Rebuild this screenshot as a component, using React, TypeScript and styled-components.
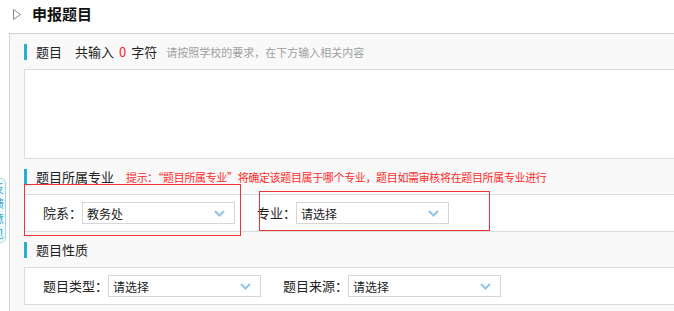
import styled, { createGlobalStyle } from "styled-components"

const Global = createGlobalStyle`
  html, body {
    margin: 0;
    padding: 0;
    background: #fff;
    overflow: hidden;
  }
  body {
    font-family: "Noto Sans CJK SC", "Liberation Sans", sans-serif;
    color: #222;
  }
`

const Page = styled.div`
  position: relative;
  width: 780px;
  height: 311px;
`

const TitleBar = styled.div`
  height: 33px;
  display: flex;
  align-items: center;
  padding-left: 13px;
  padding-bottom: 5px;
  box-sizing: border-box;

  svg{
    margin-right: 11px;
  }

  h1{
    margin: 0;
    font-size: 15px;
    line-height: 18px;
    font-weight: 700;
    color: #111;
  }
`

const Panel = styled.div`
  margin-left: 9px;
  border: 1px solid #d0d0d0;
  background: #f9f9f9;
  padding-left: 14px;
  height: 290px;
  box-sizing: border-box;
`

const SectionHeader = styled.div`
  height: 35px;
  display: flex;
  align-items: center;
  font-size: 13px;
  line-height: 16px;
  color: #222;
  white-space: nowrap;

  &::before{
    content: '';
    width: 3px;
    height: 16px;
    background: #23b1cc;
    margin-right: 9px;
  }

  .count{
    margin-left: 13px;
  }

  .zero{
    color: #ff1a1a;
    margin: 0 5px;
  }

  .gray{
    margin-left: 9px;
    font-size: 11px;
    color: #a0a0a0;
  }

  .red{
    margin-left: 12px;
    font-size: 11px;
    letter-spacing: -0.35px;
    color: #ff2a2a;
  }
`

const TextBox = styled.div`
  height: 90px;
  box-sizing: border-box;
  border: 1px solid #dcdcdc;
  border-right: none;
  background: #fff;
`

const FieldRow = styled.div`
  height: 38px;
  box-sizing: border-box;
  border: 1px solid #dcdcdc;
  border-right: none;
  background: #fff;
  display: flex;
  align-items: center;
  padding-left: 18px;
`

const Field = styled.div<{ $gap?: number }>`
  display: flex;
  align-items: center;
  margin-left: ${p => p.$gap || 0}px;

  label{
    font-size: 13px;
    line-height: 16px;
    color: #222;
    white-space: nowrap;
  }
`

const Select = styled.div`
  width: 153px;
  height: 22px;
  box-sizing: border-box;
  border: 1px solid #d6d6d6;
  background: #fff;
  display: flex;
  align-items: center;
  justify-content: space-between;
  padding: 0 9px 0 4px;
  font-size: 12px;
  color: #222;

  svg{
    margin-top: 1px;
  }
`

const Mark = styled.div<{ $x: number; $y: number; $w: number; $h: number }>`
  position: absolute;
  left: ${p => p.$x}px;
  top: ${p => p.$y}px;
  width: ${p => p.$w}px;
  height: ${p => p.$h}px;
  box-sizing: border-box;
  border: 1px solid #ee3333;
  pointer-events: none;
`

const SideTab = styled.div`
  position: absolute;
  left: -19px;
  top: 178px;
  width: 25px;
  height: 65px;
  box-sizing: border-box;
  border: 1px solid #9fd6e6;
  border-radius: 0 5px 5px 0;
  background: #f2fbfe;
  color: #3a9fc0;
  font-size: 11px;
  line-height: 15px;
  text-align: right;
  padding: 2px 1px 0 0;
  overflow: hidden;
`

const Chevron = () => (
  <svg width="11" height="7" viewBox="0 0 11 7">
    <polyline points="1,1 5.5,5.5 10,1" fill="none" stroke="#8ec4ea" strokeWidth="2" />
  </svg>
)

const Dropdown = ({ value }: { value: string }) => (
  <Select>
    <span>{value}</span>
    <Chevron />
  </Select>
)

export default function App() {
  return (
    <Page>
      <Global />
      <TitleBar>
        <svg width="8" height="11" viewBox="0 0 8 11">
          <polygon points="0.5,0.5 7.5,5.5 0.5,10.5" fill="none" stroke="#8a8a8a" strokeWidth="1" />
        </svg>
        <h1>申报题目</h1>
      </TitleBar>
      <Panel>
        <SectionHeader>
          <span>题目</span>
          <span className="count">共输入</span>
          <span className="zero">0</span>
          <span>字符</span>
          <span className="gray">请按照学校的要求，在下方输入相关内容</span>
        </SectionHeader>
        <TextBox />
        <SectionHeader>
          <span>题目所属专业</span>
          <span className="red">提示：“题目所属专业”将确定该题目属于哪个专业，题目如需审核将在题目所属专业进行</span>
        </SectionHeader>
        <FieldRow>
          <Field>
            <label>院系：</label>
            <Dropdown value="教务处" />
          </Field>
          <Field $gap={22}>
            <label>专业：</label>
            <Dropdown value="请选择" />
          </Field>
        </FieldRow>
        <SectionHeader>
          <span>题目性质</span>
        </SectionHeader>
        <FieldRow>
          <Field>
            <label>题目类型：</label>
            <Dropdown value="请选择" />
          </Field>
          <Field $gap={22}>
            <label>题目来源：</label>
            <Dropdown value="请选择" />
          </Field>
        </FieldRow>
      </Panel>
      <Mark $x={24} $y={184} $w={217} $h={52} />
      <Mark $x={259} $y={191} $w={231} $h={40} />
      <SideTab>反<br />馈<br />意<br />见</SideTab>
    </Page>
  )
}
